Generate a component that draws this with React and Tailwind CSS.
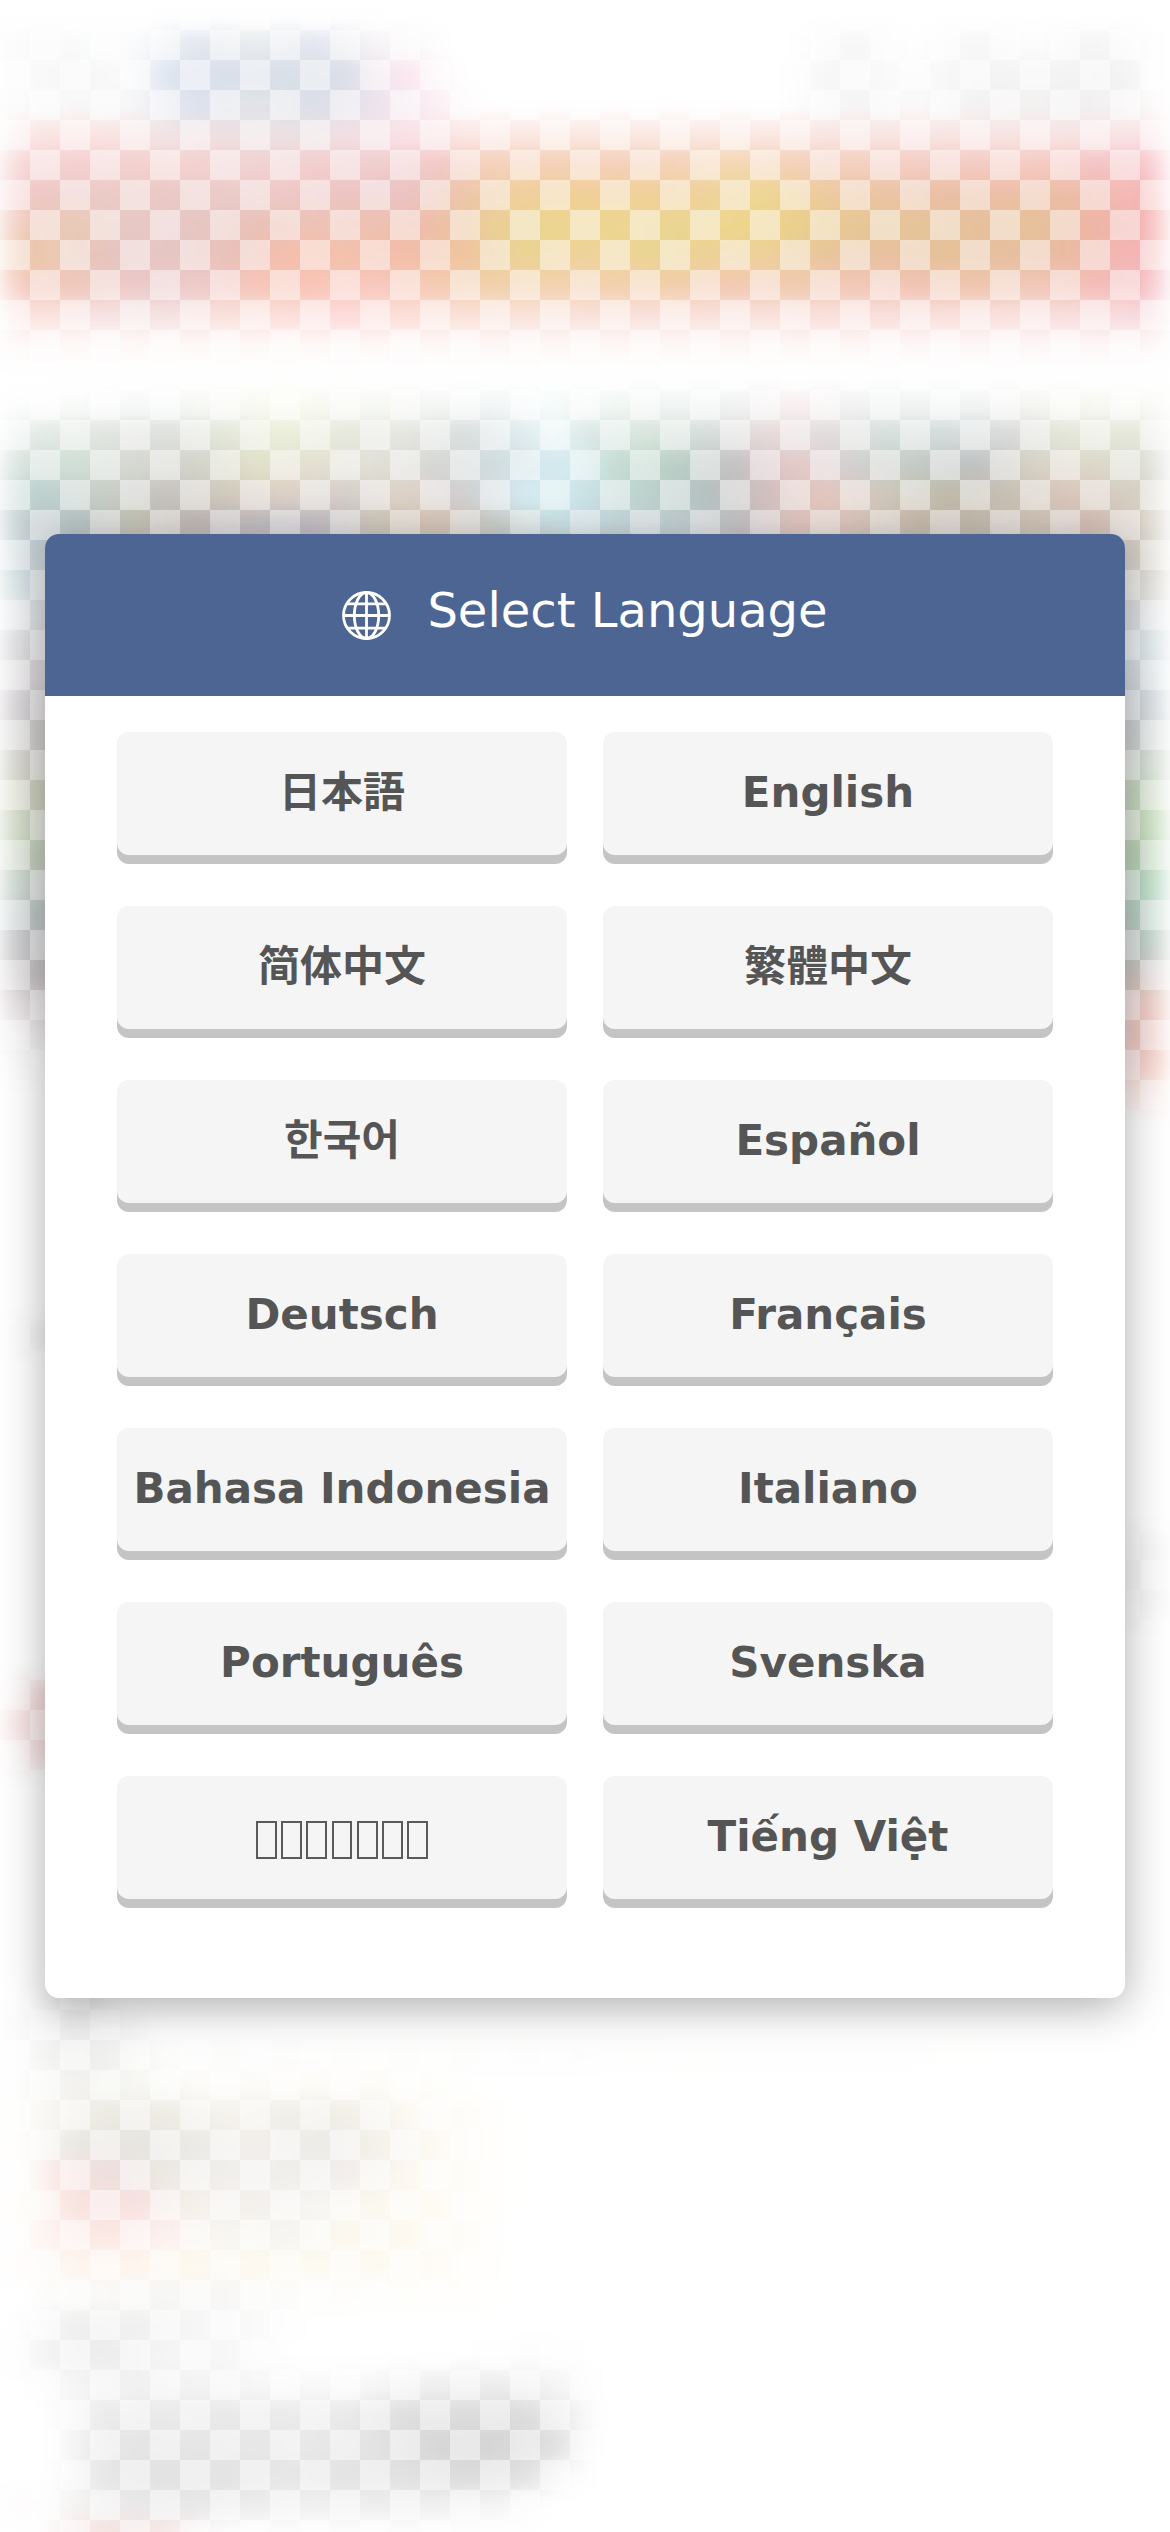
import React from "react";

const LANGUAGES = [
  "日本語", "English",
  "简体中文", "繁體中文",
  "한국어", "Español",
  "Deutsch", "Français",
  "Bahasa Indonesia", "Italiano",
  "Português", "Svenska",
  "ภาษาไทย", "Tiếng Việt",
];

// Names shown as one placeholder box per character.
const BOXED = new Set(["ภาษาไทย"]);

// Colour strips of the backdrop. Each entry is one 30px strip (or `n` of them):
// [n, "x colour, x colour, ..."] where x is the horizontal stop in pixels.
const STRIPS = [
  [1, "0 fff, 1170 fff"],
  [1, "60 fafafa, 135 fbfcfd, 195 e1e6ee, 255 e9ecef, 315 e1e5ee, 375 f7f3f6, 450 fff, 790 fff, 855 f6f6f6, 915 fff, 975 f6f6f6, 1035 fdfdfd, 1095 f4f4f4, 1160 fff"],
  [1, "30 fafafa, 75 f6f6f6, 130 fafafa, 170 dce3ef, 225 d9dfea, 285 d8dfe7, 345 d9dde7, 380 f2e8f0, 405 fbe4ee, 460 fff, 780 fff, 830 f6f6f6, 905 fbfbfb, 990 f4f4f4, 1125 f2f2f2, 1160 fff"],
  [1, "30 fbfbfb, 75 f8f8f8, 135 f7f7f8, 195 dbe1ed, 255 e2e5e8, 315 dbdee8, 375 ece3ec, 435 fceff5, 480 fff, 780 fff, 855 f5f4f4, 915 fbfafa, 975 f3f2f2, 1095 f2f0f0, 1160 fdfafa"],
  [1, "0 fceeee, 45 fae4e2, 105 fae4e3, 165 f2e4e4, 225 efdfe1, 285 ebe1e4, 345 f1e0e4, 405 fae2e7, 465 fbe7e4, 585 fae8e2, 780 fae7e3, 915 f8e5e3, 1065 f8e4e4, 1170 fbe4e6"],
  [1, "15 f6d4d4, 75 f4cfd0, 135 f3d0ce, 195 f3d1d0, 255 f1d2d2, 315 f3cdcd, 375 f0cdce, 435 f2c9c8, 495 f5d1ba, 555 f4d0b5, 615 f4d0ba, 675 f4d1b8, 735 f3d8b0, 795 f3d0b8, 855 f3cfbf, 915 f4cdc4, 975 f4cac2, 1035 f5cac1, 1095 f4c3c5, 1155 f6c2c8"],
  [1, "15 f3c8c8, 45 edc8c5, 105 ebcbc7, 165 eac8c6, 225 e9ccc8, 285 eec8c6, 345 ebc5c2, 405 ebc3c3, 465 edc6aa, 525 f0d19a, 585 f0cf98, 645 f0d198, 705 efd29c, 765 eed792, 825 edca9e, 885 ebc3a5, 945 eabfa4, 1005 ecbfa5, 1065 ebbda4, 1125 f5b9b6, 1170 f5aeb0"],
  [1, "15 efc6b6, 75 e8cab6, 135 e7c8c6, 195 e6c7c4, 255 eac1b7, 315 eec2b5, 375 edc1b2, 435 edbda8, 495 ead095, 555 ecd68f, 615 ecd690, 675 ebd592, 735 edd68c, 795 ead08a, 855 e6c795, 915 e6c598, 975 e6c09c, 1035 e6c299, 1095 eeb4a4, 1155 f4b2b2"],
  [1, "0 eebd9c, 45 eccab0, 105 e6c4be, 165 e6c6c4, 225 e8c1ba, 285 f5beab, 345 f4c1ac, 405 f3bda9, 465 f0c5a0, 525 ead493, 585 efd29c, 645 ebd593, 705 ecd296, 765 efd19a, 825 e8c59c, 885 e8c0a0, 945 e6c199, 1005 e6c0a0, 1065 eabba2, 1125 f4b6b6, 1170 f5b0b4"],
  [1, "15 f3c6ba, 75 efc8ba, 135 ebc9c9, 195 eccaca, 255 f6c5b8, 315 f9c4b6, 375 f8c8bf, 435 f5cab2, 495 f0d1aa, 555 f2d1ae, 615 f2d0ae, 675 f2cea9, 735 f3c8b4, 795 f0cbaf, 855 f2c7b8, 915 f1c4b4, 975 efc5ad, 1035 f0c8b8, 1095 f4bcb6, 1155 f5bcc4"],
  [1, "0 fae6e4, 45 fae3df, 105 f6e3e3, 165 f5e2e2, 225 f9e1dd, 285 fcdfda, 345 fddbdb, 405 fcdfd8, 465 fae1d9, 525 f9e2db, 645 f9e1dd, 765 f9e1dd, 885 f9dfdb, 1005 f9e0de, 1170 f7dade"],
  [1, "0 fef9f8, 600 fdf8f6, 1170 fdf7f7"],
  [1, "0 fff, 1170 fff"],
  [1, "0 fdfefd, 165 f6f9f7, 285 fafbf2, 495 f3f6f6, 540 f7fcfc, 620 f1f7f3, 735 f1f3f3, 795 faf0f0, 855 f2f3f3, 975 f2f4f4, 1065 f7f8f0, 1170 fafaf7"],
  [1, "15 e7efea, 45 e2eae5, 105 e1e5e0, 165 dddfdc, 225 e3e7da, 285 eaeed9, 345 e5e7dc, 405 e5e7df, 465 d8dddd, 525 e0ebef, 555 ebf6f8, 585 dae7e6, 645 d8e5dc, 705 d4dcd9, 765 e6dada, 825 e3dcdc, 885 d5e0db, 945 d3dbdb, 1005 d8d9d9, 1065 e3e6da, 1125 e5e7da, 1170 e8e9e0"],
  [1, "15 d4e0da, 75 d0ded6, 135 d6d8d1, 195 d2d2cb, 255 e2e1c8, 315 e4e0d2, 375 e2e0d8, 435 d6d6d4, 495 d0dcdf, 555 d5eaef, 585 d3eaeb, 615 c5dcd2, 675 b8cfc5, 735 c4c0c3, 795 e6c9c9, 855 d1d1d1, 915 c2cac3, 975 bec0c2, 1035 d8d2c5, 1095 dcd8ca, 1155 dadcd4"],
  [1, "0 bcd3d1, 45 bcd0ce, 105 c7cec5, 165 c5c1be, 225 d0c8bc, 285 ddd0c7, 345 d3cecb, 405 dfd2c7, 465 d0ced0, 525 d5ebf3, 555 cfecf0, 585 cae0e5, 645 bcd2cc, 705 b2c0c0, 765 d0bebb, 825 e4c6be, 885 cdc8bc, 945 bfb9a8, 1005 c5bfb3, 1065 dac5ba, 1125 d3ccc0, 1170 d8d6cc"],
  [1, "15 c0cacd, 75 b9c5c8, 135 c7c5b6, 195 c0b8b5, 255 c1bdc1, 315 c2bdc6, 375 cfc9bb, 435 dac5b5, 495 ccd0ca, 555 cfe6ea, 615 c8dade, 675 c5d3d6, 735 c4c3c7, 795 e4c8c0, 855 ddc8be, 915 cabbad, 975 c3bbad, 1035 d2c5b8, 1095 d7bfb6, 1155 d8d4ca"],
  [1, "20 c6d6dc, 80 ccc, 1090 ccc, 1150 d5cfc3"],
  [1, "20 d2e0e3, 80 ddd, 1090 ddd, 1150 dfddd6"],
  [1, "20 e2e7ea, 80 ddd, 1090 ddd, 1150 dde2e5"],
  [1, "20 d8d8dc, 80 ddd, 1090 ddd, 1150 dbe6ea"],
  [1, "20 dcd6da, 80 ddd, 1090 ddd, 1150 d2dce2"],
  [1, "20 d0ccd1, 80 ccc, 1090 ccc, 1150 d0d6dc"],
  [1, "20 d0cecb, 80 ccc, 1090 ccc, 1150 ccd4d2"],
  [1, "20 d0cfc6, 80 ccc, 1090 ccc, 1150 d1dccf"],
  [1, "20 cdd0b8, 80 ccc, 1090 ccc, 1150 c3dabb"],
  [1, "20 ccd7c1, 80 ccc, 1090 ccc, 1150 c5dfb8"],
  [1, "20 c0d0b4, 80 ccc, 1090 ccc, 1150 b4d5b0"],
  [1, "20 c5d1ca, 80 ccc, 1090 ccc, 1150 b3dbc0"],
  [1, "20 b8c4c4, 80 ccc, 1090 ccc, 1150 b4d3c3"],
  [1, "20 c2c3c6, 80 ccc, 1090 ccc, 1150 bcccc4"],
  [1, "20 c6bfc2, 80 ccc, 1090 ccc, 1150 d2c4bc"],
  [1, "20 e2dadb, 80 ddd, 1090 ddd, 1150 efc4bc"],
  [1, "20 f2eef0, 80 eee, 1090 eee, 1150 eebbb4"],
  [1, "20 fcfbfc, 80 f8f8f8, 1090 f8f8f8, 1150 f6c9c0"],
  [1, "0 fff, 1090 fff, 1150 fbe8e4"],
  [7, "0 fff, 1170 fff"],
  [1, "20 fafafa, 60 eee, 120 fff, 1170 fff"],
  [6, "0 fff, 1170 fff"],
  [3, "0 fff, 1090 f6f6f6, 1170 f6f6f6"],
  [2, "0 fff, 1170 fff"],
  [1, "0 fffafa, 45 f5d9d9, 120 fff, 1170 fff"],
  [1, "0 fae6e6, 45 f1d6d6, 120 fff, 1170 fff"],
  [1, "0 fef8f8, 45 f5e0e0, 120 fff, 1170 fff"],
  [7, "0 fff, 1170 fff"],
  [1, "30 fff, 75 e8e8e8, 120 fff, 1170 fff"],
  [1, "30 fafafa, 75 eee, 110 f5f5f5, 165 fff, 1170 fff"],
  [1, "20 fcfcfc, 50 f2f2f1, 105 eeeeed, 160 fcfcfb, 1170 fff"],
  [1, "20 fdfdfc, 75 f2f1ed, 135 f7f7f3, 195 fcfbf8, 375 fdfcf7, 490 fff, 1170 fff"],
  [1, "20 fdfdfa, 45 f9f8f4, 105 ebe9e1, 165 edebe3, 225 f5f3ec, 285 f0eee8, 345 f1ede7, 405 fdf9f2, 490 fffefb, 520 fff"],
  [1, "20 fefdfb, 45 f7f5f1, 75 e9e7e2, 135 e6e4df, 195 ebeae6, 255 f3efeb, 315 ecebe7, 375 f3f0e9, 435 fefaf2, 490 fffefb, 520 fff"],
  [1, "30 fffdfc, 55 fae7e4, 105 eedddd, 165 ece9e2, 225 f1efed, 285 efefec, 345 f3edeb, 405 fdf9f1, 490 fffefa, 520 fff"],
  [1, "30 fffefb, 55 fcebe6, 75 f8e3e0, 135 f7e1df, 195 f6f1eb, 255 f4f0ec, 315 f7f6f3, 375 fbf8ef, 435 fefbf3, 490 fffefb, 520 fff"],
  [1, "20 fffdfc, 45 fdf4f0, 105 fbe6e3, 165 fbf2ef, 225 f7f6f1, 285 f5f5f1, 345 fcf8f0, 405 fdf9f0, 490 fffefc, 520 fff"],
  [1, "20 fffdfb, 75 fdf5ee, 135 fdf5ee, 195 fef9ef, 375 fdfaf2, 450 fffcf7, 510 fff"],
  [1, "20 fff, 75 fbfbf9, 165 f7f7f5, 225 f8f7f6, 300 fdfdfb, 450 fffefb, 510 fff"],
  [1, "15 fff, 75 efefef, 135 f0f0f0, 195 f6f6f6, 260 fafafa, 310 fff"],
  [1, "15 fdfdfd, 45 f3f3f3, 105 ececec, 165 f5f5f5, 225 f7f7f7, 290 fff, 450 fff, 540 fdfdfd, 600 fff"],
  [1, "30 fff, 75 f5f5f5, 135 f1f1f1, 225 f5f5f5, 315 fafafa, 375 f7f7f7, 435 efefef, 495 ededed, 555 f4f4f4, 600 fff"],
  [1, "45 fff, 75 f5f5f5, 105 ebebeb, 165 eaeaea, 225 e9e9e9, 285 ebebeb, 345 eaeaea, 405 dedede, 465 dcdcdc, 525 dbdbdb, 560 ebebeb, 600 fff"],
  [1, "50 fff, 75 f4f4f4, 105 e8e8e8, 135 e5e5e5, 255 e7e7e7, 315 e8e8e8, 375 e3e3e3, 435 d6d6d6, 495 d5d5d5, 555 dedede, 595 fff"],
  [1, "50 fff, 75 f4f4f4, 105 e5e5e5, 165 e2e2e2, 225 e3e3e3, 285 e7e7e7, 345 e3e3e3, 405 e1e1e1, 465 dadada, 525 e0e0e0, 570 fcfcfc, 600 fff"],
  [1, "45 fefcfc, 75 f6f3f3, 135 e9e8e8, 195 e8e8e8, 255 ededed, 315 f0f0f0, 375 eee, 435 f0f0f0, 495 f5f5f5, 550 fff"],
  [1, "40 fff, 75 f9ebea, 105 f6e2e0, 165 f7e9e7, 220 fff, 1170 fff"],
];

const toGradient = (stops) =>
  "linear-gradient(to right, " +
  stops
    .split(", ")
    .map((stop) => {
      const [x, hex] = stop.split(" ");
      return `#${hex} ${x}px`;
    })
    .join(", ") +
  ")";

function Backdrop() {
  return (
    <div className="absolute inset-0 overflow-hidden" aria-hidden="true">
      <div className="flex flex-col blur-[10px]">
        {STRIPS.map(([n, stops], i) => (
          <div key={i} style={{ height: n * 30, backgroundImage: toGradient(stops) }} />
        ))}
      </div>
      <div className="absolute inset-0 bg-[linear-gradient(to_right,rgb(255_255_255/0.45)_0,rgb(255_255_255/0)_34px,rgb(255_255_255/0)_1138px,rgb(255_255_255/0.6)_1170px)]" />
      <div className="absolute inset-0 bg-[conic-gradient(rgb(255_255_255/0)_25%,rgb(255_255_255/0.46)_0_50%,rgb(255_255_255/0)_0_75%,rgb(255_255_255/0.46)_0)] bg-[length:60px_60px]" />
    </div>
  );
}

function Globe() {
  return (
    <svg className="mt-[9px] h-[49px] w-[49px]" viewBox="0 0 49 49" fill="none" stroke="currentColor" strokeWidth="2.8">
      <circle cx="24.5" cy="24.5" r="23" />
      <ellipse cx="24.5" cy="24.5" rx="12.2" ry="23" />
      <path d="M24.5 1.5v46M1.5 24.5h46M5 12.8h39M5 37.2h39" />
    </svg>
  );
}

function BoxedName({ name }) {
  return (
    <span className="mt-[6px] flex gap-[4.4px]">
      {[...name].map((_, i) => (
        <span key={i} className="h-[38px] w-[20.8px] border-2 border-[#5a5a5a]" />
      ))}
    </span>
  );
}

export default function App() {
  return (
    <main className="relative flex h-[2532px] w-[1170px] items-center justify-center overflow-hidden bg-white font-['DejaVu_Sans','Noto_Sans_CJK_JP',sans-serif]">
      <Backdrop />
      <section className="relative w-[1080px] rounded-[14px] bg-white shadow-[0_9px_45px_rgba(0,0,0,0.32)]">
        <header className="flex h-[162px] items-center justify-center gap-9 rounded-t-[14px] bg-[#4d6592] pb-[9px] text-white">
          <Globe />
          <h1 className="-mt-[2px] text-[48px] leading-none">Select Language</h1>
        </header>
        <div className="grid grid-cols-2 gap-x-9 gap-y-[51px] px-[72px] pt-9 pb-[99px]">
          {LANGUAGES.map((name) => (
            <button
              key={name}
              aria-label={name}
              className="flex h-[123px] items-center justify-center rounded-xl bg-[#f5f5f5] pb-[2px] text-[42px] leading-none font-bold whitespace-nowrap text-[#555] shadow-[0_9px_0_#c4c4c4]"
            >
              {BOXED.has(name) ? <BoxedName name={name} /> : name}
            </button>
          ))}
        </div>
      </section>
    </main>
  );
}
